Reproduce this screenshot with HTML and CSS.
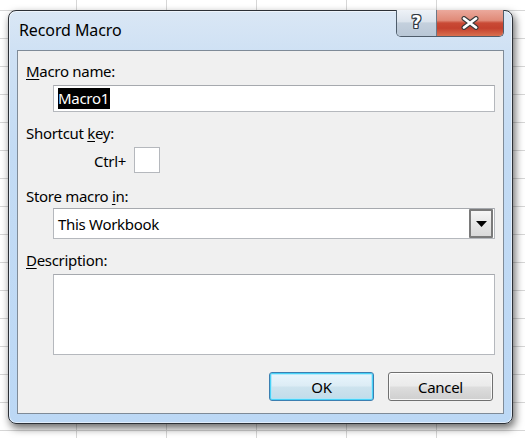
FILE: index.html
```html
<!DOCTYPE html>
<html>
<head>
<meta charset="utf-8">
<link rel="stylesheet" href="styles.css">
</head>
<body>
<div class="window">
  <div class="titlebar">
    <span class="title">Record Macro</span>
    <div class="caption-btns">
      <div class="cbtn help"><span class="qmark">?</span></div>
      <div class="cbtn close">
        <svg width="20" height="14" viewBox="0 0 20 14">
          <path d="M4 2.5 L16 11.5 M16 2.5 L4 11.5" stroke="#3a3a3a" stroke-width="5" stroke-linecap="round"/>
          <path d="M4 2.5 L16 11.5 M16 2.5 L4 11.5" stroke="#ffffff" stroke-width="2.8" stroke-linecap="round"/>
        </svg>
      </div>
    </div>
  </div>
  <div class="client">
    <div class="label l1"><u>M</u>acro name:</div>
    <div class="field name"><span class="sel">Macro1</span></div>
    <div class="label l2">Shortcut <u>k</u>ey:</div>
    <div class="ctrl-row"><span class="ctrl">Ctrl+</span><div class="keybox"></div></div>
    <div class="label l3">Store macro <u>i</u>n:</div>
    <div class="combo">
      <span class="combo-text">This Workbook</span>
      <div class="dd">
        <svg width="11" height="6" viewBox="0 0 11 6"><path d="M0 0 H11 L5.5 6 Z" fill="#000"/></svg>
      </div>
    </div>
    <div class="label l4"><u>D</u>escription:</div>
    <div class="field desc"></div>
    <div class="buttons">
      <div class="btn ok">OK</div>
      <div class="btn">Cancel</div>
    </div>
  </div>
</div>
</body>
</html>
```
FILE: styles.css
```css
html, body {
  margin: 0;
  padding: 0;
}
body {
  width: 525px;
  height: 438px;
  overflow: hidden;
  background-color: #ffffff;
  background-image:
    linear-gradient(to right, #d6d6d6 1px, transparent 1px),
    linear-gradient(to bottom, #d6d6d6 1px, transparent 1px);
  background-size: 90px 100%, 100% 28px;
  background-position: 76px 0, 0 10px;
  font-family: "Noto Sans", "Open Sans", sans-serif;
  font-size: 15px;
  letter-spacing: -0.3px;
  color: #000;
}
.window {
  margin: 10px 0 0 8px;
  width: 505px;
  height: 414px;
  box-sizing: border-box;
  border: 1px solid #2c3036;
  border-radius: 8px;
  padding: 0 8px 9px 8px;
  display: flex;
  flex-direction: column;
  background: linear-gradient(to bottom, #dae7f5 0px, #cfe1f4 40px, #c3dbf4 140px, #bcd8f5 414px);
  box-shadow: 2px 4px 9px rgba(0,0,0,0.6), inset 0 0 0 1px rgba(255,255,255,0.55);
}
.titlebar {
  height: 39px;
  flex: none;
  display: flex;
  align-items: flex-start;
  justify-content: space-between;
}
.title {
  padding-top: 9px;
  padding-left: 2px;
  line-height: 20px;
  font-size: 16px;
  letter-spacing: -0.1px;
  color: #000;
}
.caption-btns {
  display: flex;
  margin-top: -1px;
  border: 1px solid #4f5d6b;
  border-top: none;
  border-radius: 0 0 5px 5px;
  overflow: hidden;
  height: 26px;
}
.cbtn {
  display: flex;
  align-items: center;
  justify-content: center;
  height: 26px;
}
.help {
  width: 39px;
  background: linear-gradient(to bottom, #eef2f7 0%, #dbe3ec 45%, #c4d0dd 50%, #b9c7d6 100%);
  border-right: 1px solid #6b7887;
}
.qmark {
  font-family: "DejaVu Sans", sans-serif;
  font-weight: bold;
  font-size: 17px;
  line-height: 18px;
  letter-spacing: 0;
  color: #ffffff;
  text-shadow: 1px 0 0 #2f3843, -1px 0 0 #2f3843, 0 1px 0 #2f3843, 0 -1px 0 #2f3843,
    1px 1px 0 #2f3843, -1px -1px 0 #2f3843, 1px -1px 0 #2f3843, -1px 1px 0 #2f3843;
  margin-top: -2px;
}
.close {
  width: 66px;
  background: linear-gradient(to bottom, #eba99c 0%, #e08a78 40%, #c94a36 50%, #c4412e 70%, #d9704f 100%);
}
.client {
  flex: 1;
  background: #f0f0f0;
  border: 1px solid #7f8b98;
  padding: 0 8px 0 8px;
  display: flex;
  flex-direction: column;
}
.label {
  line-height: 20px;
  height: 20px;
  white-space: nowrap;
}
.label u {
  text-decoration-thickness: 1px;
  text-underline-offset: 2px;
}
.l1 { margin-top: 10px; }
.l2 { margin-top: 11px; }
.l3 { margin-top: 13px; }
.l4 { margin-top: 11px; }
.field {
  margin-left: 27px;
  width: 442px;
  box-sizing: border-box;
  background: #ffffff;
  border: 1px solid #b5b8bd;
  border-top-color: #a6a9ae;
}
.name {
  margin-top: 4px;
  height: 27px;
  padding: 2px 0 0 4px;
}
.sel {
  display: inline-block;
  background: #000000;
  color: #ffffff;
  line-height: 21px;
  height: 21px;
  padding: 0 1px 0 0;
}
.ctrl-row {
  margin-top: 4px;
  height: 26px;
  display: flex;
  align-items: flex-end;
}
.ctrl {
  margin-left: 68px;
  line-height: 20px;
  margin-bottom: 2px;
}
.keybox {
  margin-left: 8px;
  width: 26px;
  height: 26px;
  box-sizing: border-box;
  background: #ffffff;
  border: 1px solid #b5b8bd;
}
.combo {
  margin-top: 2px;
  margin-left: 27px;
  width: 442px;
  height: 31px;
  box-sizing: border-box;
  background: #ffffff;
  border: 1px solid #b5b8bd;
  border-top-color: #a6a9ae;
  display: flex;
  align-items: center;
  justify-content: space-between;
  padding: 0 1px 0 4px;
}
.combo-text {
  line-height: 20px;
}
.dd {
  width: 24px;
  height: 29px;
  box-sizing: border-box;
  border: 2px solid #7a7a7a;
  border-radius: 1px;
  background: linear-gradient(to bottom, #f6f6f6 0%, #e6e6e6 50%, #d9d9d9 100%);
  display: flex;
  align-items: center;
  justify-content: center;
}
.desc {
  margin-top: 4px;
  height: 81px;
}
.buttons {
  margin-top: 17px;
  display: flex;
  justify-content: flex-end;
  gap: 14px;
  padding-right: 2px;
}
.btn {
  width: 105px;
  height: 29px;
  box-sizing: border-box;
  border: 1px solid #707070;
  border-radius: 3px;
  background: linear-gradient(to bottom, #f2f2f2 0%, #ebebeb 48%, #dddddd 52%, #cfcfcf 100%);
  box-shadow: inset 0 0 0 1px rgba(255,255,255,0.8);
  display: flex;
  align-items: center;
  justify-content: center;
  line-height: 20px;
}
.ok {
  border-color: #3c7fb1;
  box-shadow: inset 0 0 0 1px #48d2f7, inset 0 0 0 2px rgba(170,230,250,0.8);
  background: linear-gradient(to bottom, #eaf6fd 0%, #dcecf5 48%, #cde3ee 52%, #c1dbe9 100%);
}
```
